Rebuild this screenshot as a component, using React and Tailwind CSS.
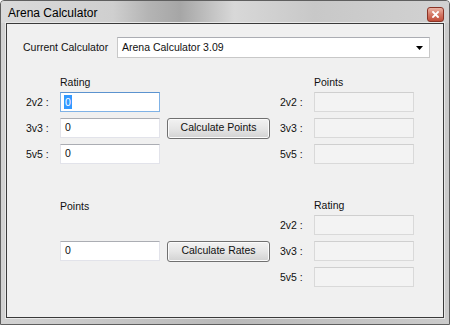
import React from 'react';

const font = { fontFamily: '"Liberation Sans", Arial, sans-serif' };

const TextBox = ({ value, disabled, focused, selected }) => {
  if (disabled) {
    return (
      <div className="w-[100px] h-[20px] bg-[#f3f3f3] border border-[#d9d9d9] border-t-[#cfcfcf]"></div>
    );
  }
  return (
    <div
      className={`w-[100px] h-[20px] bg-white border flex items-center pl-[3px] text-[10.5px] text-[#111] ${
        focused
          ? 'border-[#7fb2e6] border-t-[#5b93cf]'
          : 'border-[#e2e3ea] border-t-[#abadb3]'
      }`}
    >
      {selected ? (
        <span className="bg-[#3399ff] text-white leading-[14px] px-[1px]">{value}</span>
      ) : (
        <span className="px-[1px]">{value}</span>
      )}
    </div>
  );
};

const WinButton = ({ children }) => (
  <div className="w-[103px] h-[21px] rounded-[3px] border border-[#707070] bg-gradient-to-b from-[#f2f2f2] via-[#e6e6e6] to-[#d2d2d2] flex items-center justify-center text-[10.5px] text-[#111] shadow-[inset_0_0_0_1px_#fbfbfb]">
    {children}
  </div>
);

const Label = ({ children }) => (
  <div className="w-[34px] text-[10.5px] text-[#111] leading-[13px]">{children}</div>
);

const Row = ({ left, middle, right }) => (
  <div className="flex items-center h-[20px]">
    <div className="w-[160px] flex items-center pl-[19px]">{left}</div>
    <div className="w-[113px] flex items-center">{middle}</div>
    <div className="flex items-center">{right}</div>
  </div>
);

export default function App() {
  return (
    <div
      className="w-[450px] h-[325px] border border-[#5f5f5f] rounded-t-[4px] bg-gradient-to-r from-[#d2d2d2] via-[#b9b9b9] to-[#cbcbcb] flex flex-col overflow-hidden"
      style={font}
    >
      {/* Title bar */}
      <div className="h-[22px] flex items-center justify-between pl-[7px] pr-[5px] bg-[linear-gradient(90deg,#dadada_0%,#cfcfcf_25%,#b4b4b4_33%,#a6a6a6_40%,#d8d8d8_52%,#c8c8c8_70%,#d2d2d2_100%)]">
        <span className="text-[12px] text-black mt-[1px]">Arena Calculator</span>
        <div className="w-[17px] h-[15px] mt-[4px] rounded-[3px] border border-[#8a3325] bg-gradient-to-b from-[#eab3a4] via-[#d47866] to-[#c04c38] flex items-center justify-center">
          <svg width="7" height="7" viewBox="0 0 7 7">
            <path d="M1 1 L6 6 M6 1 L1 6" stroke="#ffffff" strokeWidth="1.8" strokeLinecap="square" />
          </svg>
        </div>
      </div>

      {/* Client area */}
      <div className="mx-[5px] border border-[#3a3a3a] shadow-[0_0_0_1px_#e8e8e8] bg-[#f0f0f0] h-[295px] flex flex-col text-[#111]">
        {/* Calculator selector */}
        <div className="flex items-center mt-[13px] pl-[16px]">
          <div className="w-[94px] text-[10.5px]">Current Calculator</div>
          <div className="w-[313px] h-[21px] bg-white border border-[#c8c8c8] border-t-[#abadb3] flex items-center justify-between pl-[4px] pr-[6px] text-[10.5px]">
            <span>Arena Calculator 3.09</span>
            <svg width="7" height="4" viewBox="0 0 7 4">
              <path d="M0 0 H7 L3.5 4 Z" fill="#000000" />
            </svg>
          </div>
        </div>

        {/* Rating -> Points */}
        <div className="flex items-center h-[13px] mt-[18px] text-[10.5px]">
          <div className="w-[160px] pl-[53px]">Rating</div>
          <div className="w-[113px]"></div>
          <div className="pl-[34px]">Points</div>
        </div>
        <div className="flex flex-col gap-[6px] mt-[3px]">
          <Row
            left={<><Label>2v2 :</Label><TextBox value="0" focused selected /></>}
            right={<><Label>2v2 :</Label><TextBox disabled /></>}
          />
          <Row
            left={<><Label>3v3 :</Label><TextBox value="0" /></>}
            middle={<WinButton>Calculate Points</WinButton>}
            right={<><Label>3v3 :</Label><TextBox disabled /></>}
          />
          <Row
            left={<><Label>5v5 :</Label><TextBox value="0" /></>}
            right={<><Label>5v5 :</Label><TextBox disabled /></>}
          />
        </div>

        {/* Points -> Rating */}
        <div className="flex items-center h-[13px] mt-[35px] text-[10.5px]">
          <div className="w-[160px] pl-[53px] mt-[2px]">Points</div>
          <div className="w-[113px]"></div>
          <div className="pl-[34px]">Rating</div>
        </div>
        <div className="flex flex-col gap-[6px] mt-[3px]">
          <Row right={<><Label>2v2 :</Label><TextBox disabled /></>} />
          <Row
            left={<><div className="w-[34px]"></div><TextBox value="0" /></>}
            middle={<WinButton>Calculate Rates</WinButton>}
            right={<><Label>3v3 :</Label><TextBox disabled /></>}
          />
          <Row right={<><Label>5v5 :</Label><TextBox disabled /></>} />
        </div>
      </div>
    </div>
  );
}
